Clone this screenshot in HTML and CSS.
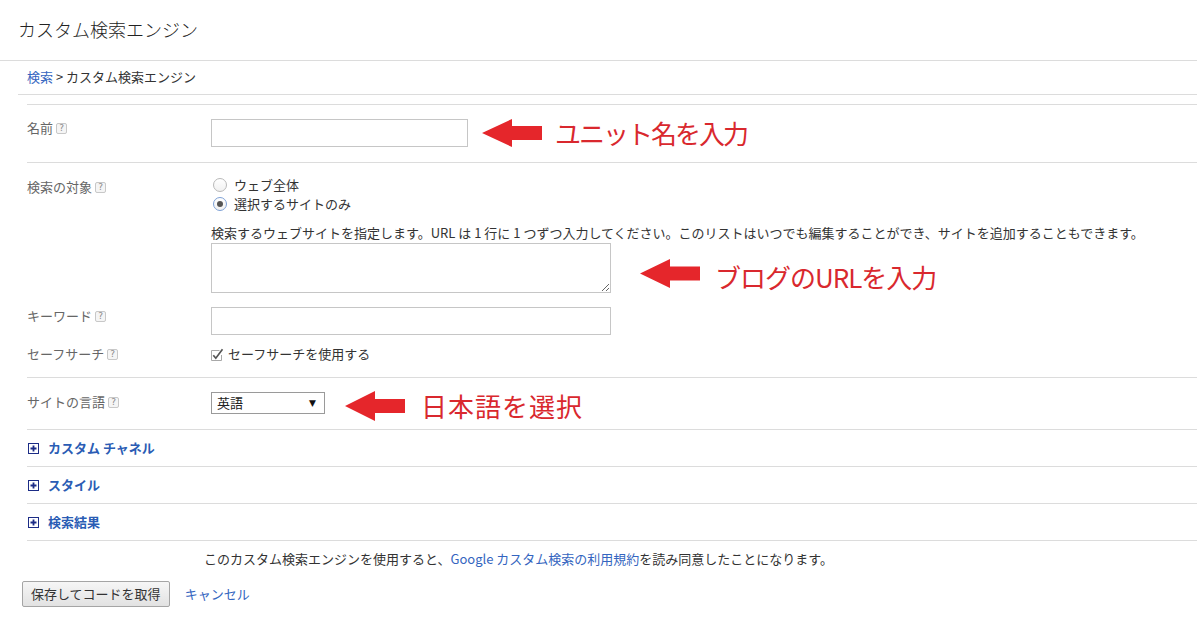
FILE: index.html
```html
<!DOCTYPE html>
<html lang="ja">
<head>
    <meta charset="UTF-8">
    <title>カスタム検索エンジン</title>
    <link rel="stylesheet" href="styles.css">
</head>
<body>
    <div class="page-header">
        <h1>カスタム検索エンジン</h1>
    </div>

    <div class="breadcrumb">
        <a href="#">検索</a> &gt; カスタム検索エンジン
    </div>

    <div class="form">
        <!-- name -->
        <div class="section section-name">
            <div class="row">
                <div class="label">名前<span class="help">?</span></div>
                <div class="field field-inline name-line">
                    <input class="text-input name-input" type="text">
                    <svg class="arrow" width="60" height="28" viewBox="0 0 60 28"><polygon points="0,14 30,0 30,7 60,7 60,21 30,21 30,28"/></svg>
                    <span class="note note-name">ユニット名を入力</span>
                </div>
            </div>
        </div>

        <!-- search target / keywords / safe search -->
        <div class="section section-target">
            <div class="row">
                <div class="label label-radio">検索の対象<span class="help">?</span></div>
                <div class="field">
                    <div class="radio-line"><span class="radio"></span>ウェブ全体</div>
                    <div class="radio-line"><span class="radio checked"></span>選択するサイトのみ</div>
                    <p class="hint">検索するウェブサイトを指定します。URL は 1 行に 1 つずつ入力してください。このリストはいつでも編集することができ、サイトを追加することもできます。</p>
                    <div class="field-inline sites-line">
                        <textarea class="sites"></textarea>
                        <svg class="arrow arrow-sites" width="60" height="29" viewBox="0 0 60 29"><polygon points="0,14.5 30,0 30,7.5 60,7.5 60,21.5 30,21.5 30,29"/></svg>
                        <span class="note note-sites">ブログのURLを入力</span>
                    </div>
                </div>
            </div>
            <div class="row row-keyword">
                <div class="label">キーワード<span class="help">?</span></div>
                <div class="field">
                    <input class="text-input wide-input" type="text">
                </div>
            </div>
            <div class="row row-safe">
                <div class="label">セーフサーチ<span class="help">?</span></div>
                <div class="field">
                    <div class="check-line">
                        <svg class="checkbox" width="13" height="13" viewBox="0 0 13 13">
                            <path d="M8.5 2.5 H0.5 V12.5 H10.5 V7" fill="#fff" stroke="#a8a8a8"/>
                            <path d="M2.3 7.2 L4.8 10.2 L11.5 1.2" fill="none" stroke="#555" stroke-width="1.7"/>
                        </svg>
                        セーフサーチを使用する
                    </div>
                </div>
            </div>
        </div>

        <!-- language -->
        <div class="section section-lang">
            <div class="row">
                <div class="label">サイトの言語<span class="help">?</span></div>
                <div class="field field-inline lang-line">
                    <div class="select"><span>英語</span><span class="caret">▼</span></div>
                    <svg class="arrow arrow-lang" width="60" height="30" viewBox="0 0 60 30"><polygon points="0,15 30,0 30,8 60,8 60,22 30,22 30,30"/></svg>
                    <span class="note note-lang">日本語を選択</span>
                </div>
            </div>
        </div>

        <div class="section toggle"><svg class="plus" width="11" height="11" viewBox="0 0 11 11"><rect x="0.5" y="0.5" width="10" height="10" fill="#fff" stroke="#1c2c86"/><path d="M2.5 5.5 H8.5 M5.5 2.5 V8.5" stroke="#1c2c86" stroke-width="1.8"/></svg><a href="#">カスタム チャネル</a></div>
        <div class="section toggle"><svg class="plus" width="11" height="11" viewBox="0 0 11 11"><rect x="0.5" y="0.5" width="10" height="10" fill="#fff" stroke="#1c2c86"/><path d="M2.5 5.5 H8.5 M5.5 2.5 V8.5" stroke="#1c2c86" stroke-width="1.8"/></svg><a href="#">スタイル</a></div>
        <div class="section toggle"><svg class="plus" width="11" height="11" viewBox="0 0 11 11"><rect x="0.5" y="0.5" width="10" height="10" fill="#fff" stroke="#1c2c86"/><path d="M2.5 5.5 H8.5 M5.5 2.5 V8.5" stroke="#1c2c86" stroke-width="1.8"/></svg><a href="#">検索結果</a></div>
        <div class="section"></div>
    </div>

    <p class="terms">このカスタム検索エンジンを使用すると、<a href="#">Google カスタム検索の利用規約</a>を読み同意したことになります。</p>

    <div class="actions">
        <button class="button" type="button">保存してコードを取得</button>
        <a class="cancel" href="#">キャンセル</a>
    </div>
</body>
</html>
```

FILE: styles.css
```css
* {
    margin: 0;
    padding: 0;
    box-sizing: border-box;
}

body {
    font-family: "Noto Sans CJK JP", "Noto Sans", sans-serif;
    font-size: 13px;
    line-height: 20px;
    color: #333;
    background: #fff;
}

a {
    color: #3465c0;
    text-decoration: none;
}

.page-header {
    height: 61px;
    border-bottom: 1px solid #dcdcdc;
    display: flex;
    align-items: center;
    padding: 0 0 3px 18px;
}

.page-header h1 {
    font-size: 18px;
    font-weight: 300;
    color: #222;
    line-height: 24px;
}

.breadcrumb {
    margin-left: 18px;
    height: 34px;
    padding: 6px 0 0 9px;
    border-bottom: 1px solid #dcdcdc;
    color: #333;
}

.form {
    margin: 9px 0 0 27px;
}

.section {
    border-top: 1px solid #dcdcdc;
}

.row {
    display: flex;
    align-items: flex-start;
}

.label {
    width: 184px;
    flex: none;
    color: #666;
    display: flex;
    align-items: center;
}

.help {
    display: inline-block;
    width: 11px;
    height: 11px;
    margin-left: 3px;
    border: 1px solid #c8c8c8;
    border-radius: 2px;
    background: #f5f5f5;
    color: #8a8a8a;
    font-size: 9px;
    line-height: 9px;
    text-align: center;
    font-family: "DejaVu Sans", sans-serif;
}

.field-inline {
    display: flex;
    align-items: center;
}

.section-name {
    padding: 13px 0 15px;
}

.name-line {
    height: 28px;
    margin-top: 1px;
}

.text-input {
    height: 28px;
    border: 1px solid #c6c6c6;
    background: #fff;
    font: inherit;
}

.name-input {
    width: 257px;
}

.wide-input {
    width: 400px;
    display: block;
}

.arrow {
    fill: #e5262b;
    flex: none;
}

.note {
    color: #d9282e;
    font-size: 26px;
    line-height: 26px;
    white-space: nowrap;
}

.name-input + .arrow {
    margin: 0 13px 0 14px;
}

.note-name {
    letter-spacing: -2px;
}

.section-target {
    padding: 12px 0 13px;
}

.label-radio {
    margin-top: 2px;
}

.radio-line {
    display: flex;
    align-items: center;
    height: 19px;
    padding-left: 2px;
    color: #333;
}

.radio {
    width: 14px;
    height: 14px;
    border-radius: 50%;
    border: 1px solid #b9b9b9;
    background: linear-gradient(#fff, #f1f1f1);
    margin-right: 7px;
    display: flex;
    align-items: center;
    justify-content: center;
}

.radio.checked {
    border-color: #7ea1d6;
}

.radio.checked::after {
    content: "";
    width: 6px;
    height: 6px;
    border-radius: 50%;
    background: #555;
}

.hint {
    margin-top: 10px;
    white-space: nowrap;
}

.sites-line {
    align-items: flex-end;
    height: 50px;
}

.sites {
    width: 400px;
    height: 50px;
    border: 1px solid #c6c6c6;
    display: block;
    resize: both;
    font: inherit;
}

.arrow-sites {
    margin: 0 15px 5px 29px;
}

.note-sites {
    letter-spacing: -1px;
    margin-bottom: 3px;
}

.row-keyword {
    margin-top: 14px;
}

.row-keyword .label {
    margin-top: -1px;
}

.row-safe {
    margin-top: 9px;
}

.check-line {
    display: flex;
    align-items: center;
    color: #333;
}

.checkbox {
    margin-right: 4px;
}

.section-lang {
    padding: 14px 0 15px;
}

.lang-line {
    height: 22px;
}

.select {
    width: 114px;
    height: 22px;
    border: 1px solid #9a9a9a;
    background: #fff;
    display: flex;
    align-items: center;
    justify-content: space-between;
    padding: 0 8px 0 5px;
    color: #222;
}

.caret {
    font-size: 9px;
    font-family: "DejaVu Sans", sans-serif;
    color: #111;
}

.arrow-lang {
    margin: 5px 16px 0 20px;
}

.note-lang {
    letter-spacing: 1px;
    margin-top: 5px;
}

.toggle {
    height: 37px;
    display: flex;
    align-items: center;
    padding-left: 1px;
}

.toggle .plus {
    margin-right: 9px;
}

.toggle a {
    font-weight: bold;
    color: #2a5cb4;
}

.terms {
    margin: 8px 0 0 204px;
    color: #333;
}

.actions {
    display: flex;
    align-items: center;
    margin: 12px 0 0 22px;
}

.button {
    height: 26px;
    padding: 0 8px;
    border: 1px solid #a5a5a5;
    border-radius: 2px;
    background: linear-gradient(#f6f6f6, #e2e2e2);
    font: inherit;
    color: #333;
}

.cancel {
    margin-left: 15px;
}
```
